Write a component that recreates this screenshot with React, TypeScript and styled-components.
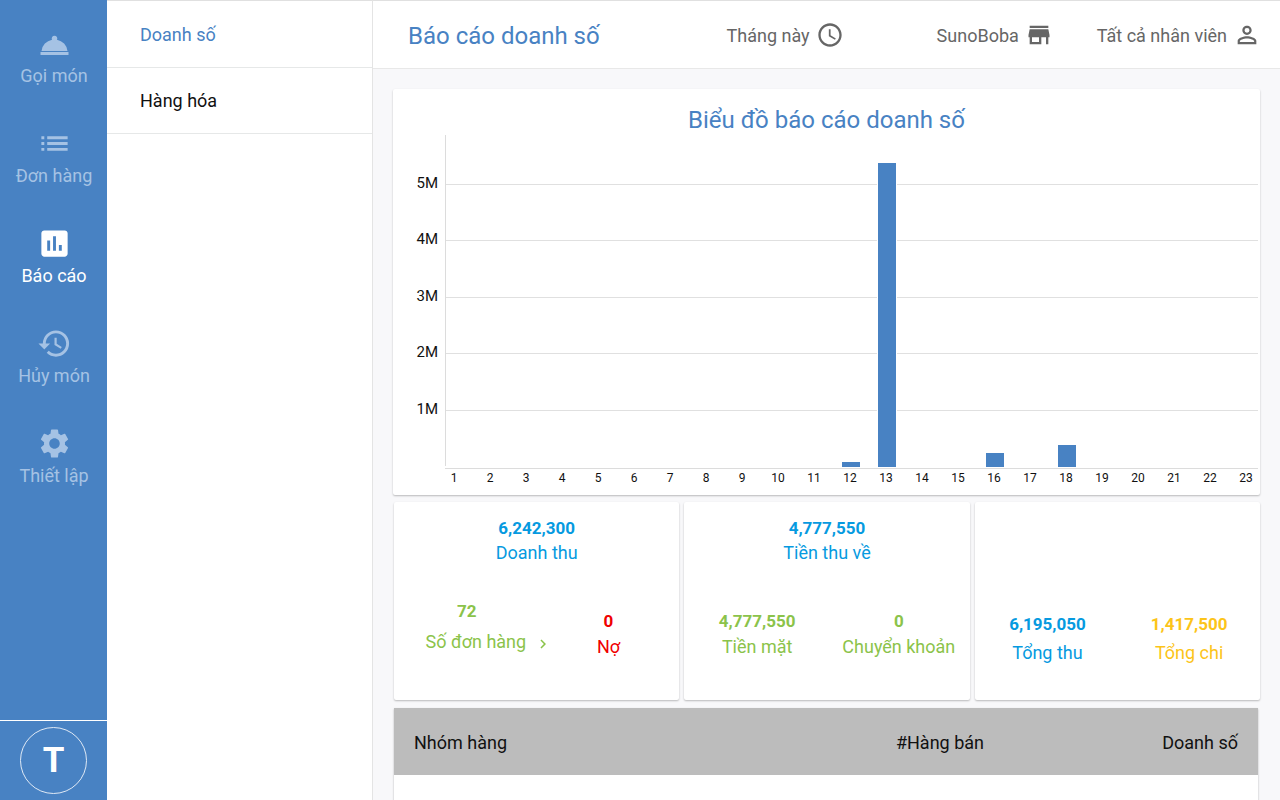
import React from "react";
import styled, { createGlobalStyle, css } from "styled-components";
import {
  MdAccessTime,
  MdAssessment,
  MdChevronRight,
  MdHistory,
  MdList,
  MdPersonOutline,
  MdSettings,
  MdStore,
} from "react-icons/md";

const blue = "#4882c3";

const GlobalStyle = createGlobalStyle`
  *, *::before, *::after { box-sizing: border-box; }
  body {
    margin: 0;
    background: #f8f8fa;
    color: #111;
    font-family: Roboto, "Liberation Sans", sans-serif;
    font-size: 18px;
    line-height: 24px;
    overflow: hidden;
  }
  h1, h2 { margin: 0; }
  button { font: inherit; border: 0; background: none; padding: 0; cursor: pointer; }
  a { text-decoration: none; }
`;

const Layout = styled.div`
  display: flex;
  height: 100vh;
  overflow: hidden;
`;

const Sidebar = styled.nav`
  flex: 0 0 107px;
  display: flex;
  flex-direction: column;
  background: ${blue};
`;

const NavList = styled.div`
  flex: 1;
  display: flex;
  flex-direction: column;
  padding: 26px 0 0 1px;
`;

const NavItem = styled.a<{ $active?: boolean }>`
  display: flex;
  flex-direction: column;
  align-items: center;
  gap: 3px;
  height: 100px;
  color: ${(p) => (p.$active ? "#fff" : "#a5c2e4")};
  white-space: nowrap;

  svg { width: 35px; height: 35px; }
`;

const Account = styled.div`
  display: flex;
  justify-content: center;
  padding: 6px 0;
  border-top: 1px solid #fff;
`;

const Avatar = styled.button`
  width: 67px;
  height: 67px;
  border: 1px solid #dfe9f5;
  border-radius: 50%;
  color: #fff;
  font-size: 35px;
  font-weight: 700;
`;

const Submenu = styled.nav`
  flex: 0 0 266px;
  padding-top: 1px;
  background: #fff;
  border-top: 1px solid #e0e0e0;
  border-right: 1px solid #e4e4e4;
`;

const SubmenuItem = styled.a<{ $active?: boolean }>`
  display: block;
  padding: 21px 33px 20px;
  border-bottom: 1px solid #e6e8e8;
  color: ${(p) => (p.$active ? blue : "#111")};
`;

const Content = styled.main`
  flex: 1;
  min-width: 0;
`;

const Header = styled.header`
  display: flex;
  align-items: center;
  height: 69px;
  padding: 2px 19px 0 35px;
  background: #fff;
  border-top: 1px solid #e0e0e0;
  border-bottom: 1px solid #e8e8e8;
`;

const titleText = css`
  color: ${blue};
  font-size: 24px;
  font-weight: 400;
  line-height: 32px;
`;

const Title = styled.h1`
  ${titleText}
  flex: 1;
`;

const Filters = styled.div`
  display: flex;
  align-items: center;
`;

const Filter = styled.button`
  display: flex;
  align-items: center;
  gap: 6px;
  margin-left: 44px;
  color: #666;
  white-space: nowrap;

  &:first-child { margin-right: 49px; }
  svg { width: 28px; height: 28px; margin-bottom: 2px; }
`;

const Report = styled.div`
  padding: 20px 20px 0;
`;

const card = css`
  background: #fff;
  border-radius: 2px;
  box-shadow: 0 1px 2px rgba(0, 0, 0, 0.26);
`;

const ChartCard = styled.section`
  ${card}
  padding: 15px 2px 9px 16px;
`;

const ChartTitle = styled.h2`
  ${titleText}
  height: 31px;
  padding-right: 14px;
  text-align: center;
`;

const Plot = styled.div`
  display: grid;
  grid-template-columns: 36px minmax(0, 1fr);
  height: 334px;
`;

const AxisLabels = styled.div`
  display: grid;
  grid-template-rows: 50px repeat(5, 1fr);
  margin-bottom: -2px;
  padding: 4px 7px 0 0;
  text-align: right;
  font-size: 15px;
  line-height: 12px;
`;

const AxisLabel = styled.span`
  align-self: end;
`;

const PlotArea = styled.div`
  display: grid;
  border-left: 1px solid #dcdcdc;
  border-bottom: 1px solid #dcdcdc;
  padding-bottom: 1px;
`;

const GridLines = styled.div`
  grid-area: 1 / 1;
  display: grid;
  grid-template-rows: 50px repeat(5, 1fr);
`;

const GridLine = styled.div`
  border-bottom: 1px solid #e0e0e0;
`;

const Bars = styled.div`
  grid-area: 1 / 1;
  display: flex;
  justify-content: space-between;
  align-items: flex-end;
  padding-right: 2px;
`;

const Bar = styled.div`
  width: 18px;
  background: ${blue};
  box-shadow: 0 0 0 1px #fff;
`;

const HourLabels = styled.div`
  display: flex;
  justify-content: space-between;
  padding: 1px 3px 0 36px;
  font-size: 12px;
  line-height: 16px;
`;

const HourLabel = styled.span`
  width: 18px;
  text-align: center;
`;

const Summary = styled.div`
  display: grid;
  grid-template-columns: repeat(3, minmax(0, 1fr));
  gap: 5px;
  padding: 7px 0 8px 1px;
`;

const SummaryCard = styled.section`
  ${card}
  display: flex;
  flex-direction: column;
  height: 198px;
  padding-top: 14px;
`;

const SummaryTotal = styled.div`
  height: 82px;
`;

const Split = styled.div`
  display: grid;
  grid-template-columns: repeat(2, minmax(0, 1fr));
  padding-left: 2px;
`;

type Tone = "blue" | "green" | "red" | "amber";
const tones: Record<Tone, string> = {
  blue: "#069ae0",
  green: "#8bc34a",
  red: "#f00000",
  amber: "#fcc419",
};

const StatBox = styled.div<{ $tone: Tone; $offset: number; $gap: number }>`
  display: flex;
  flex-direction: column;
  align-items: center;
  gap: ${(p) => p.$gap}px;
  padding-top: ${(p) => p.$offset}px;
  color: ${(p) => tones[p.$tone]};
  white-space: nowrap;

  strong { font-size: 17px; }
`;

const OrdersLink = styled.a`
  display: flex;
  align-items: center;
  gap: 8px;
  color: inherit;
  padding-left: 44px;

  svg { width: 18px; height: 18px; margin-top: 3px; }
`;

const Table = styled.table`
  width: calc(100% - 3px);
  margin-left: 1px;
  border-collapse: collapse;
  table-layout: fixed;
  background: #fff;
  box-shadow: 0 1px 2px rgba(0, 0, 0, 0.26);
`;

const Th = styled.th<{ $right?: boolean }>`
  height: 67px;
  padding: 2px 20px 0;
  background: #bcbcbc;
  font-weight: 400;
  text-align: ${(p) => (p.$right ? "right" : "left")};

  &:last-child { width: 254px; }
`;

const Td = styled.td`
  height: 67px;
`;

const DishIcon = () => (
  <svg viewBox="0 0 35 35" fill="currentColor" aria-hidden="true">
    <path d="M4.500 25a13 13 0 0 1 10.500-11.300 2.800 2.800 0 1 1 5 0A13 13 0 0 1 30.500 25z" />
    <rect x="3.500" y="26" width="28" height="3" />
  </svg>
);

const hourlySales: Record<number, number> = { 12: 92300, 13: 5390000, 16: 250000, 18: 390000 };
const chartMax = 5886500;
const hours = Array.from({ length: 23 }, (_, i) => i + 1);
const ticks = ["5M", "4M", "3M", "2M", "1M"];

interface StatProps {
  value: string;
  label: React.ReactNode;
  tone: Tone;
  offset?: number;
  gap?: number;
}

const Stat = ({ value, label, tone, offset = 0, gap = 1 }: StatProps) => (
  <StatBox $tone={tone} $offset={offset} $gap={gap}>
    <strong>{value}</strong>
    <span>{label}</span>
  </StatBox>
);

export default function App() {
  return (
    <>
      <GlobalStyle />
      <Layout>
        <Sidebar>
          <NavList>
            <NavItem href="#order"><DishIcon />Gọi món</NavItem>
            <NavItem href="#orders"><MdList />Đơn hàng</NavItem>
            <NavItem href="#report" $active><MdAssessment />Báo cáo</NavItem>
            <NavItem href="#cancelled"><MdHistory />Hủy món</NavItem>
            <NavItem href="#settings"><MdSettings />Thiết lập</NavItem>
          </NavList>
          <Account><Avatar type="button">T</Avatar></Account>
        </Sidebar>

        <Submenu>
          <SubmenuItem href="#sales" $active>Doanh số</SubmenuItem>
          <SubmenuItem href="#goods">Hàng hóa</SubmenuItem>
        </Submenu>

        <Content>
          <Header>
            <Title>Báo cáo doanh số</Title>
            <Filters>
              <Filter type="button">Tháng này<MdAccessTime /></Filter>
              <Filter type="button">SunoBoba<MdStore /></Filter>
              <Filter type="button">Tất cả nhân viên<MdPersonOutline /></Filter>
            </Filters>
          </Header>

          <Report>
            <ChartCard>
              <ChartTitle>Biểu đồ báo cáo doanh số</ChartTitle>
              <Plot>
                <AxisLabels>
                  {ticks.map((t) => <AxisLabel key={t}>{t}</AxisLabel>)}
                </AxisLabels>
                <PlotArea>
                  <GridLines>
                    {ticks.map((t) => <GridLine key={t} />)}
                  </GridLines>
                  <Bars>
                    {hours.map((h) => (
                      <Bar key={h} style={{ height: `${((hourlySales[h] ?? 0) / chartMax) * 100}%` }} />
                    ))}
                  </Bars>
                </PlotArea>
              </Plot>
              <HourLabels>
                {hours.map((h) => <HourLabel key={h}>{h}</HourLabel>)}
              </HourLabels>
            </ChartCard>

            <Summary>
              <SummaryCard>
                <SummaryTotal><Stat value="6,242,300" label="Doanh thu" tone="blue" /></SummaryTotal>
                <Split>
                  <Stat
                    value="72"
                    label={<OrdersLink href="#order-list">Số đơn hàng<MdChevronRight /></OrdersLink>}
                    tone="green"
                    offset={1}
                    gap={7}
                  />
                  <Stat value="0" label="Nợ" tone="red" offset={11} gap={2} />
                </Split>
              </SummaryCard>
              <SummaryCard>
                <SummaryTotal><Stat value="4,777,550" label="Tiền thu về" tone="blue" /></SummaryTotal>
                <Split>
                  <Stat value="4,777,550" label="Tiền mặt" tone="green" offset={11} gap={2} />
                  <Stat value="0" label="Chuyển khoản" tone="green" offset={11} gap={2} />
                </Split>
              </SummaryCard>
              <SummaryCard>
                <SummaryTotal />
                <Split>
                  <Stat value="6,195,050" label="Tổng thu" tone="blue" offset={14} gap={5} />
                  <Stat value="1,417,500" label="Tổng chi" tone="amber" offset={14} gap={5} />
                </Split>
              </SummaryCard>
            </Summary>

            <Table>
              <thead>
                <tr>
                  <Th scope="col">Nhóm hàng</Th>
                  <Th scope="col" $right>#Hàng bán</Th>
                  <Th scope="col" $right>Doanh số</Th>
                </tr>
              </thead>
              <tbody>
                <tr><Td colSpan={3} /></tr>
              </tbody>
            </Table>
          </Report>
        </Content>
      </Layout>
    </>
  );
}
